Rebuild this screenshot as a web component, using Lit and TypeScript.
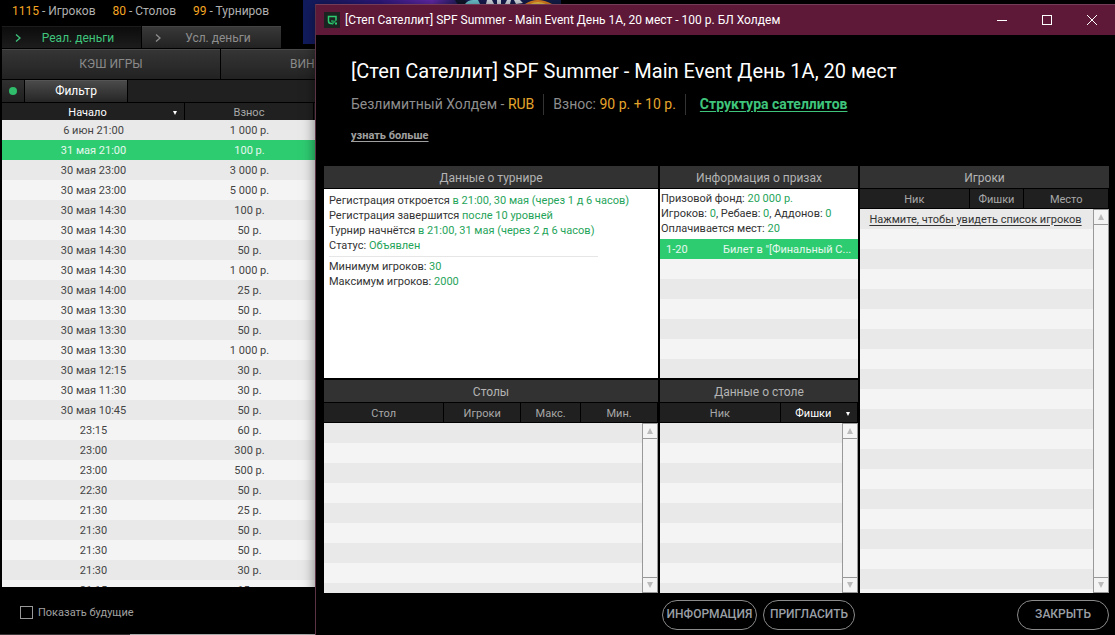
import { LitElement, html, css, svg } from "lit";
import { customElement, property } from "lit/decorators.js";

interface Column {
  label: string;
  width: number;
  sorted?: boolean;
}

const STARTS: [string, string][] = [
  ["6 июн 21:00", "1 000 р."],
  ["31 мая 21:00", "100 р."],
  ["30 мая 23:00", "3 000 р."],
  ["30 мая 23:00", "5 000 р."],
  ["30 мая 14:30", "100 р."],
  ["30 мая 14:30", "50 р."],
  ["30 мая 14:30", "50 р."],
  ["30 мая 14:30", "1 000 р."],
  ["30 мая 14:00", "25 р."],
  ["30 мая 13:30", "50 р."],
  ["30 мая 13:30", "50 р."],
  ["30 мая 13:30", "1 000 р."],
  ["30 мая 12:15", "30 р."],
  ["30 мая 11:30", "30 р."],
  ["30 мая 10:45", "50 р."],
  ["23:15", "60 р."],
  ["23:00", "300 р."],
  ["23:00", "500 р."],
  ["22:30", "50 р."],
  ["21:30", "25 р."],
  ["21:30", "50 р."],
  ["21:30", "50 р."],
  ["21:30", "30 р."],
  ["21:15", "15 р."],
];

/** Scroll bar with an arrow button at each end. */
@customElement("scroll-rail")
export class ScrollRail extends LitElement {
  static styles = css`
    :host {
      display: flex;
      flex-direction: column;
      justify-content: space-between;
      box-sizing: border-box;
      width: 16px;
      flex: none;
      background: #f4f4f4;
      border: 1px solid #999;
    }
    .arrow {
      display: grid;
      place-items: center;
      height: 15px;
      padding: 0;
      border: 0;
      background: none;
    }
    .up {
      border-bottom: 1px solid #999;
    }
    .down {
      border-top: 1px solid #999;
    }
    svg {
      display: block;
      fill: #bbb;
    }
  `;
  render() {
    return html`
      <button class="arrow up" aria-label="Вверх">
        <svg width="6" height="6" viewBox="0 0 6 6"><path d="M3 0 6 6H0z" /></svg>
      </button>
      <button class="arrow down" aria-label="Вниз">
        <svg width="6" height="6" viewBox="0 0 6 6"><path d="M3 6 0 0h6z" /></svg>
      </button>
    `;
  }
}

/** Titled panel: optional column heads above a striped list with a scroll bar. */
@customElement("list-panel")
export class ListPanel extends LitElement {
  @property() heading = "";
  @property({ attribute: false }) columns: Column[] = [];

  static styles = css`
    :host {
      display: flex;
      flex-direction: column;
      min-width: 0;
      min-height: 0;
    }
    h2 {
      margin: 0 0 1px;
      padding-top: 2px;
      background: #323232;
      color: #b4b4b4;
      font: 12px/20px Roboto, sans-serif;
      text-align: center;
    }
    table {
      width: 100%;
      table-layout: fixed;
      border-spacing: 0;
      margin-bottom: 1px;
    }
    th {
      padding: 2px 0 0;
      background: #202020;
      border-right: 1px solid #000;
      color: #a8a8a8;
      font: 11px/17px Roboto, sans-serif;
      text-align: center;
    }
    th.sorted {
      color: #fff;
    }
    .head {
      display: flex;
      align-items: center;
      justify-content: flex-end;
    }
    .head span {
      flex: 1;
    }
    .mark {
      margin-right: 7px;
      fill: #fff;
    }
    .body {
      flex: 1;
      display: flex;
      min-height: 0;
    }
    .rows {
      flex: 1;
      min-width: 0;
      background: repeating-linear-gradient(#e9e9e9 0 20px, #f4f4f4 20px 40px);
    }
  `;

  render() {
    return html`
      <h2>${this.heading}</h2>
      ${this.columns.length
        ? html`<table>
              <colgroup>
                ${this.columns.map((c) => html`<col style="width:${c.width}%" />`)}
              </colgroup>
              <thead>
                <tr>
                  ${this.columns.map((c) =>
                    c.sorted
                      ? html`<th class="sorted">
                          <div class="head">
                            <span>${c.label}</span>
                            <svg class="mark" width="4" height="4" viewBox="0 0 4 4">
                              <path d="M0 0h4L2 4z" />
                            </svg>
                          </div>
                        </th>`
                      : html`<th>${c.label}</th>`
                  )}
                </tr>
              </thead>
            </table>
            <div class="body">
              <div class="rows"><slot></slot></div>
              <scroll-rail></scroll-rail>
            </div>`
        : html`<slot></slot>`}
    `;
  }
}

/** Lobby behind the tournament window. */
@customElement("poker-lobby")
export class PokerLobby extends LitElement {
  static styles = css`
    :host {
      display: flex;
      flex-direction: column;
      height: 100vh;
      box-sizing: border-box;
      padding-left: 2px;
      background: #000;
      font-family: Roboto, sans-serif;
      overflow: hidden;
    }
    button {
      padding: 0;
      border: 0;
      font: inherit;
    }
    .top {
      display: flex;
      flex: none;
      height: 49px;
    }
    .left {
      width: 301px;
    }
    .stats {
      display: flex;
      gap: 17px;
      height: 26px;
      padding-left: 10px;
      color: #b0b0b0;
      font-size: 12px;
      line-height: 22px;
      box-sizing: border-box;
    }
    .stats b {
      font-weight: 400;
      color: #f5a623;
    }
    .tabs {
      display: flex;
      gap: 1px;
    }
    .tab {
      display: flex;
      align-items: center;
      width: 139px;
      height: 22px;
      background: linear-gradient(#383838, #222);
      color: #8e8e8e;
      font-size: 12px;
      border-top: 1px solid #444;
    }
    .tab span {
      flex: 1;
      padding-right: 6px;
    }
    .tab svg {
      margin-left: 13px;
      fill: none;
      stroke: currentColor;
      stroke-width: 1.3;
    }
    .tab.on {
      background: linear-gradient(#0c0c0c, #1c1c1c);
      border-color: #1c1c1c;
      color: #3fc47c;
    }
    .banner {
      width: 258px;
      height: 44px;
    }
    .nav,
    .filters {
      display: flex;
      flex: none;
      gap: 1px;
      margin-bottom: 1px;
    }
    .nav button {
      height: 30px;
      width: 218px;
      padding-bottom: 2px;
      background: linear-gradient(#353535, #222);
      border-top: 1px solid #484848;
      color: #8a8a8a;
      font-size: 12px;
    }
    .nav .cut {
      padding-left: 69px;
      text-align: left;
    }
    .filters {
      height: 22px;
    }
    .dot {
      display: grid;
      place-items: center;
      width: 22px;
      background: linear-gradient(#303030, #202020);
    }
    .dot i {
      width: 8px;
      height: 8px;
      border-radius: 50%;
      background: #2fbd6b;
    }
    .filter {
      width: 102px;
      padding-bottom: 2px;
      background: linear-gradient(#4a4a4a, #262626);
      border-top: 1px solid #555;
      color: #fff;
      font-size: 12px;
    }
    .filler {
      flex: 1;
      background: #202020;
    }
    .list {
      flex: 1;
      min-height: 0;
      overflow: hidden;
    }
    table {
      width: 100%;
      table-layout: fixed;
      border-spacing: 0;
    }
    .c1 {
      width: 183px;
    }
    .c2 {
      width: 129px;
    }
    th {
      padding: 2px 0 0;
      background: #202020;
      border-right: 1px solid #000;
      color: #a8a8a8;
      font: 11px/15px Roboto, sans-serif;
    }
    th.sorted {
      color: #fff;
    }
    .head {
      display: flex;
      align-items: center;
    }
    .head span {
      flex: 1;
    }
    .head svg {
      margin-right: 7px;
      fill: #fff;
    }
    td {
      padding: 2px 0 0;
      background: #f4f4f4;
      color: #444;
      font-size: 11px;
      line-height: 18px;
      text-align: center;
    }
    tr:nth-child(odd) td {
      background: #e9e9e9;
    }
    tr.picked td {
      background: #2ecc71;
      color: #e6f8ee;
    }
    .foot {
      flex: none;
      display: flex;
      align-items: center;
      height: 47px;
      box-sizing: border-box;
      padding: 3px 0 0 18px;
      color: #a0a0a0;
      font-size: 11px;
    }
    label {
      display: flex;
      align-items: center;
      gap: 5px;
    }
    input {
      appearance: none;
      width: 13px;
      height: 13px;
      margin: 0;
      border: 1px solid #999;
    }
    .edge {
      flex: none;
      height: 1px;
      margin-left: -2px;
      background: linear-gradient(90deg, #3a3436 130px, #a8a8a8 130px);
    }
  `;

  render() {
    const chevron = svg`<svg width="6" height="8" viewBox="0 0 6 8"><path d="M1 0.500 5 4 1 7.500"/></svg>`;
    return html`
      <div class="top">
        <div class="left">
          <div class="stats">
            <span><b>1115</b> - Игроков</span>
            <span><b>80</b> - Столов</span>
            <span><b>99</b> - Турниров</span>
          </div>
          <div class="tabs">
            <button class="tab on">${chevron}<span>Реал. деньги</span></button>
            <button class="tab">${chevron}<span>Усл. деньги</span></button>
          </div>
        </div>
        <svg class="banner" viewBox="0 0 258 44">
          <defs>
            <linearGradient id="sky" x1="0" x2="1">
              <stop offset="0" stop-color="#101c5c" />
              <stop offset=".3" stop-color="#321a86" />
              <stop offset=".5" stop-color="#6a2cb4" />
              <stop offset=".62" stop-color="#1a1c56" />
              <stop offset="1" stop-color="#14204e" />
            </linearGradient>
          </defs>
          <rect width="258" height="44" fill="url(#sky)" />
          <path d="M152 0h10l4 5h-11z" fill="#10162c" />
          <path d="M162 4q3-4 8-4h5l2 4z" fill="#74d3de" />
          <path d="M183 4 184 0h5l2 4zM194 4V0h4v4zM202 4l2-4h4l-1 4zM213 4l-2-4h6l3 3z" fill="#e6ecf4" />
          <path d="M222 4q12-8 27 0z" fill="#f08a24" />
          <path d="M227 4q8-4 16 0z" fill="#ffd24a" />
        </svg>
      </div>
      <nav class="nav">
        <button>КЭШ ИГРЫ</button>
        <button class="cut">ВИН</button>
      </nav>
      <div class="filters">
        <button class="dot" aria-label="Состояние"><i></i></button>
        <button class="filter">Фильтр</button>
        <div class="filler"></div>
      </div>
      <div class="list">
        <table>
          <colgroup><col class="c1" /><col class="c2" /><col /></colgroup>
          <thead>
            <tr>
              <th class="sorted">
                <div class="head">
                  <span>Начало</span>
                  <svg width="4" height="4" viewBox="0 0 4 4"><path d="M0 0h4L2 4z" /></svg>
                </div>
              </th>
              <th>Взнос</th>
              <th></th>
            </tr>
          </thead>
          <tbody>
            ${STARTS.map(
              ([time, fee], i) =>
                html`<tr class=${i === 1 ? "picked" : ""}><td>${time}</td><td>${fee}</td><td></td></tr>`
            )}
          </tbody>
        </table>
      </div>
      <div class="foot">
        <label><input type="checkbox" />Показать будущие</label>
      </div>
      <div class="edge"></div>
    `;
  }
}

/** Tournament details window. */
@customElement("tournament-window")
export class TournamentWindow extends LitElement {
  static styles = css`
    :host {
      display: flex;
      flex-direction: column;
      box-sizing: border-box;
      background: #000;
      border-left: 1px solid #5a3444;
      box-shadow: 0 0 12px rgba(0, 0, 0, 0.5);
      font-family: Roboto, sans-serif;
      color: #8e8e8e;
    }
    button {
      padding: 0;
      border: 0;
      background: none;
      font: inherit;
      color: inherit;
    }
    .bar {
      display: flex;
      align-items: center;
      flex: none;
      height: 31px;
      box-sizing: border-box;
      padding: 0 1px 0 8px;
      background: #5e1838;
      border-top: 1px solid #743c56;
      color: #fff;
      font: 12px/30px Roboto, sans-serif;
    }
    .bar .name {
      flex: 1;
      margin-left: 5px;
      white-space: nowrap;
      overflow: hidden;
    }
    .bar button {
      display: grid;
      place-items: center;
      width: 45px;
      height: 29px;
    }
    .bar button svg {
      fill: none;
      stroke: #fff;
    }
    .intro {
      flex: none;
      height: 131px;
      box-sizing: border-box;
      padding: 24px 0 0 35px;
    }
    h1 {
      margin: 0 0 11px;
      color: #fff;
      font-size: 20px;
      font-weight: 400;
      line-height: 24px;
    }
    .facts {
      display: flex;
      font-size: 14px;
      line-height: 21px;
    }
    .facts > * + * {
      margin-left: 9px;
      padding-left: 9px;
      border-left: 1px solid #333;
    }
    .facts > .link {
      padding-left: 14px;
    }
    .facts em {
      font-style: normal;
      color: #e5a52c;
    }
    a {
      color: #3fc47c;
      font-weight: 700;
      text-underline-offset: 2px;
    }
    .more {
      display: inline-block;
      margin-top: 14px;
      color: #a0a0a0;
      font-size: 11px;
      line-height: 14px;
    }
    .grid {
      flex: 1;
      display: grid;
      grid-template-columns: 334fr 198fr 249fr;
      grid-template-rows: 212fr 213fr;
      gap: 2px;
      min-height: 0;
      padding: 0 6px 0 8px;
    }
    .tall {
      grid-column: 3;
      grid-row: 1 / 3;
    }
    .info,
    .prizes {
      flex: 1;
      background: #fff;
      color: #333;
      font-size: 11px;
      line-height: 15px;
    }
    .info {
      padding: 4px 5px 0;
    }
    .info p,
    .prizes p {
      margin: 0;
      white-space: nowrap;
    }
    .info hr {
      width: 269px;
      height: 1px;
      margin: 3px 0 2px;
      border: 0;
      background: #e6e6e6;
    }
    b {
      font-weight: 400;
      color: #1fa45a;
    }
    .prizes {
      display: flex;
      flex-direction: column;
      min-width: 0;
    }
    .prizes p {
      padding-left: 1px;
    }
    .prizes p:first-child {
      padding-top: 2px;
    }
    .places {
      flex: 1;
      margin-top: 3px;
      background: repeating-linear-gradient(#e9e9e9 0 20px, #f4f4f4 20px 40px);
    }
    .places table {
      width: 100%;
      table-layout: fixed;
      border-spacing: 0;
    }
    .places td {
      padding: 2px 6px 0;
      background: #2ecc71;
      color: #e6f8ee;
      line-height: 18px;
      white-space: nowrap;
    }
    .places .rank {
      width: 45px;
    }
    .reveal {
      display: block;
      width: 100%;
      height: 20px;
      padding-right: 2px;
      color: #333;
      font-size: 11px;
      text-decoration: underline;
      text-underline-offset: 2px;
    }
    .actions {
      flex: none;
      display: flex;
      gap: 6px;
      padding: 7px 6px 5px 346px;
    }
    .pill {
      width: 92px;
      height: 30px;
      padding-bottom: 2px;
      border: 1px solid #8a8a8a;
      border-radius: 15px;
      color: #9a9fa5;
      font-size: 12px;
      font-weight: 500;
    }
    .pill.wide {
      width: 95px;
    }
    .pill:last-child {
      margin-left: auto;
    }
  `;

  render() {
    return html`
      <header class="bar">
        <svg width="16" height="16" viewBox="0 0 16 16">
          <rect width="16" height="16" fill="#1c2422" />
          <path d="M12 8.500V4.500H4.500V9q0 2.500 2.500 2.500h2" fill="none" stroke="#2ecc71" stroke-width="1.500" />
          <path d="M12 8 9 11.500V9H7" fill="none" stroke="#1f9c58" stroke-width="1.300" />
          <rect x="11" y="10.500" width="2" height="2" fill="#2ecc71" />
        </svg>
        <span class="name">[Степ Сателлит] SPF Summer - Main Event День 1А, 20 мест - 100 р. БЛ Холдем</span>
        <button aria-label="Свернуть"><svg width="10" height="10"><path d="M0 5.500h10" /></svg></button>
        <button aria-label="Развернуть"><svg width="10" height="10"><rect x=".5" y=".5" width="9" height="9" /></svg></button>
        <button aria-label="Закрыть"><svg width="10" height="10"><path d="M0 0l10 10M10 0L0 10" /></svg></button>
      </header>
      <section class="intro">
        <h1>[Степ Сателлит] SPF Summer - Main Event День 1А, 20 мест</h1>
        <div class="facts">
          <span>Безлимитный Холдем - <em>RUB</em></span>
          <span>Взнос: <em>90 р. + 10 р.</em></span>
          <span class="link"><a href="#structure">Структура сателлитов</a></span>
        </div>
        <a class="more" href="#more">узнать больше</a>
      </section>
      <main class="grid">
        <list-panel heading="Данные о турнире">
          <div class="info">
            <p>Регистрация откроется <b>в 21:00, 30 мая (через 1 д 6 часов)</b></p>
            <p>Регистрация завершится <b>после 10 уровней</b></p>
            <p>Турнир начнётся <b>в 21:00, 31 мая (через 2 д 6 часов)</b></p>
            <p>Статус: <b>Объявлен</b></p>
            <hr />
            <p>Минимум игроков: <b>30</b></p>
            <p>Максимум игроков: <b>2000</b></p>
          </div>
        </list-panel>
        <list-panel heading="Информация о призах">
          <div class="prizes">
            <p>Призовой фонд: <b>20 000 р.</b></p>
            <p>Игроков: <b>0</b>, Ребаев: <b>0</b>, Аддонов: <b>0</b></p>
            <p>Оплачивается мест: <b>20</b></p>
            <div class="places">
              <table>
                <tbody>
                  <tr><td class="rank">1-20</td><td>Билет в "[Финальный С...</td></tr>
                </tbody>
              </table>
            </div>
          </div>
        </list-panel>
        <list-panel
          class="tall"
          heading="Игроки"
          .columns=${[
            { label: "Ник", width: 44 },
            { label: "Фишки", width: 22 },
            { label: "Место", width: 34 },
          ]}
        >
          <button class="reveal">Нажмите, чтобы увидеть список игроков</button>
        </list-panel>
        <list-panel
          heading="Столы"
          .columns=${[
            { label: "Стол", width: 36 },
            { label: "Игроки", width: 23 },
            { label: "Макс.", width: 18 },
            { label: "Мин.", width: 23 },
          ]}
        ></list-panel>
        <list-panel
          heading="Данные о столе"
          .columns=${[
            { label: "Ник", width: 61 },
            { label: "Фишки", width: 39, sorted: true },
          ]}
        ></list-panel>
      </main>
      <footer class="actions">
        <button class="pill wide">ИНФОРМАЦИЯ</button>
        <button class="pill">ПРИГЛАСИТЬ</button>
        <button class="pill">ЗАКРЫТЬ</button>
      </footer>
    `;
  }
}

@customElement("app-root")
export class AppRoot extends LitElement {
  static styles = css`
    :host {
      display: block;
      position: relative;
      height: 100vh;
      overflow: hidden;
      background: #000;
    }
    .window {
      position: absolute;
      inset: 4px 0 0 315px;
    }
  `;
  render() {
    return html`
      <poker-lobby></poker-lobby>
      <tournament-window class="window"></tournament-window>
    `;
  }
}
